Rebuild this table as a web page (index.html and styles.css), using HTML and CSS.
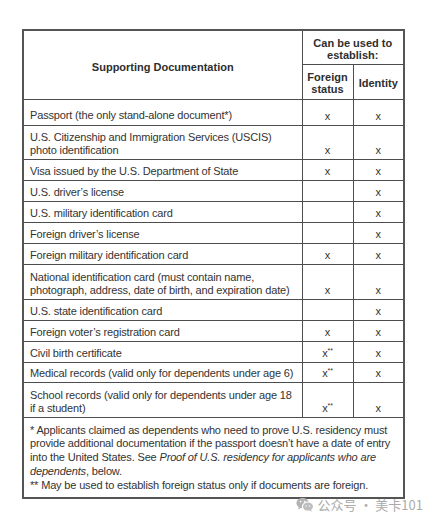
FILE: index.html
```html
<!DOCTYPE html>
<html lang="en">
<head>
    <meta charset="UTF-8">
    <meta name="viewport" content="width=device-width, initial-scale=1.0">
    <title>Supporting Documentation</title>
    <link rel="stylesheet" href="styles.css">
</head>
<body>
    <div class="page">
        <table class="docs">
            <colgroup>
                <col class="col-doc">
                <col class="col-mark">
                <col class="col-mark">
            </colgroup>
            <thead>
                <tr class="head-top">
                    <th rowspan="2" class="head-main">Supporting Documentation</th>
                    <th colspan="2">Can be used to<br>establish:</th>
                </tr>
                <tr class="head-sub">
                    <th>Foreign<br>status</th>
                    <th>Identity</th>
                </tr>
            </thead>
            <tbody>
                <tr class="row-first">
                    <td>Passport (the only stand-alone document*)</td>
                    <td class="mark">x</td>
                    <td class="mark">x</td>
                </tr>
                <tr class="row-double row-uscis">
                    <td>U.S. Citizenship and Immigration Services (USCIS)<br>photo identification</td>
                    <td class="mark">x</td>
                    <td class="mark">x</td>
                </tr>
                <tr>
                    <td>Visa issued by the U.S. Department of State</td>
                    <td class="mark">x</td>
                    <td class="mark">x</td>
                </tr>
                <tr>
                    <td>U.S. driver’s license</td>
                    <td class="mark"></td>
                    <td class="mark">x</td>
                </tr>
                <tr>
                    <td>U.S. military identification card</td>
                    <td class="mark"></td>
                    <td class="mark">x</td>
                </tr>
                <tr>
                    <td>Foreign driver’s license</td>
                    <td class="mark"></td>
                    <td class="mark">x</td>
                </tr>
                <tr>
                    <td>Foreign military identification card</td>
                    <td class="mark">x</td>
                    <td class="mark">x</td>
                </tr>
                <tr class="row-double">
                    <td>National identification card (must contain name,<br>photograph, address, date of birth, and expiration date)</td>
                    <td class="mark">x</td>
                    <td class="mark">x</td>
                </tr>
                <tr>
                    <td>U.S. state identification card</td>
                    <td class="mark"></td>
                    <td class="mark">x</td>
                </tr>
                <tr>
                    <td>Foreign voter’s registration card</td>
                    <td class="mark">x</td>
                    <td class="mark">x</td>
                </tr>
                <tr>
                    <td>Civil birth certificate</td>
                    <td class="mark">x<sup>**</sup></td>
                    <td class="mark">x</td>
                </tr>
                <tr class="row-short">
                    <td>Medical records (valid only for dependents under age 6)</td>
                    <td class="mark">x<sup>**</sup></td>
                    <td class="mark">x</td>
                </tr>
                <tr class="row-double">
                    <td>School records (valid only for dependents under age 18<br>if a student)</td>
                    <td class="mark">x<sup>**</sup></td>
                    <td class="mark">x</td>
                </tr>
                <tr class="row-notes">
                    <td colspan="3" class="notes">
                        * Applicants claimed as dependents who need to prove U.S. residency must<br>
                        provide additional documentation if the passport doesn’t have a date of entry<br>
                        into the United States. See <em>Proof of U.S. residency for applicants who are<br>
                        dependents</em>, below.<br>
                        ** May be used to establish foreign status only if documents are foreign.
                    </td>
                </tr>
            </tbody>
        </table>

        <div class="watermark">
            <svg class="wechat" width="18" height="15" viewBox="0 0 18 15">
                <ellipse cx="6.6" cy="6" rx="6.2" ry="5.2" fill="#b3b3b3"/>
                <path d="M2.8 9.8 L2.2 12.6 L5.4 10.8 Z" fill="#b3b3b3"/>
                <ellipse cx="12" cy="9.6" rx="5.6" ry="4.6" fill="#bdbdbd" stroke="#fff" stroke-width="1.2"/>
                <path d="M15 13 L16 14.8 L13.3 13.6 Z" fill="#bdbdbd"/>
                <circle cx="4.6" cy="4.6" r="0.9" fill="#fff"/>
                <circle cx="8.6" cy="4.6" r="0.9" fill="#fff"/>
                <circle cx="10.2" cy="9" r="0.7" fill="#fff"/>
                <circle cx="13.6" cy="9" r="0.7" fill="#fff"/>
            </svg>
            <span>公众号 · 美卡101</span>
        </div>
    </div>
</body>
</html>
```

FILE: styles.css
```css
* {
    margin: 0;
    padding: 0;
    box-sizing: border-box;
}

body {
    background: #fff;
    font-family: "Liberation Sans", Arial, sans-serif;
    color: #333;
}

.page {
    padding: 29px 0 0 22px;
    width: 436px;
}

.docs {
    border-collapse: collapse;
    width: 382px;
    table-layout: fixed;
    border: 2px solid #555;
    font-size: 11px;
    letter-spacing: -0.16px;
    line-height: 13px;
}

.col-doc {
    width: 279px;
}

.col-mark {
    width: 51px;
}

.docs th,
.docs td {
    border: 1px solid #4d4d4d;
}

.docs th {
    letter-spacing: 0;
    font-weight: bold;
    text-align: center;
    vertical-align: middle;
    color: #2e2e2e;
    line-height: 12px;
}

.docs tr {
    height: 21px;
}

.docs .head-top {
    height: 34px;
}

.docs .head-sub {
    height: 35px;
}

.docs .head-top th {
    padding-top: 3px;
}

.docs .head-top th.head-main {
    padding-top: 5px;
}

.docs .head-sub th {
    padding-top: 3px;
}

.docs td {
    vertical-align: bottom;
    padding: 0 6px 2px;
}

.docs .row-first {
    height: 26px;
}

.docs .row-first td {
    padding-bottom: 3px;
}

.docs .row-double {
    height: 35px;
}

.docs .row-uscis {
    height: 34px;
}

.docs .row-short {
    height: 20px;
}

.docs td.mark {
    text-align: center;
    padding: 0 0 2px;
}

.mark sup {
    font-size: 7px;
    line-height: 0;
    vertical-align: 4px;
}

.docs td.notes {
    vertical-align: top;
    padding: 6px 6px 5px;
    line-height: 13.75px;
}

.notes em {
    font-style: italic;
}

.watermark {
    display: flex;
    align-items: center;
    justify-content: flex-end;
    gap: 4px;
    width: 401px;
    margin-top: -2px;
    color: #ababab;
    font-family: "Noto Sans CJK SC", "Liberation Sans", sans-serif;
    font-size: 13px;
    line-height: 15px;
}
```
